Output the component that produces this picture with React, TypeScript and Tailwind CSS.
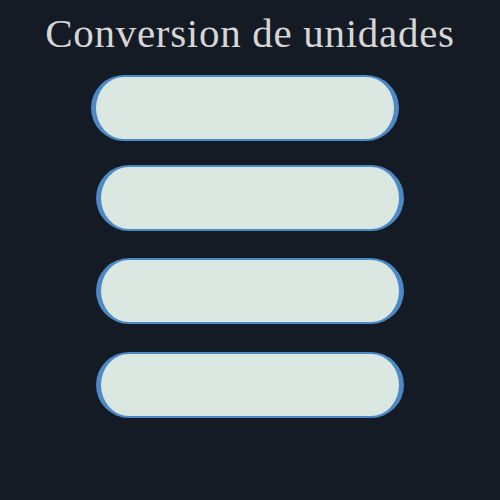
import React from 'react';

const pills = [
  { id: 'a', cls: 'mr-[10px]' },
  { id: 'b', cls: 'mt-[24px]' },
  { id: 'c', cls: 'mt-[27px]' },
  { id: 'd', cls: 'mt-[28px]' },
];

export default function App() {
  return (
    <div className="flex h-[500px] w-[500px] flex-col items-center bg-[#151b25]">
      <h1 className="mt-[9px] font-['Liberation_Serif',serif] text-[41px] leading-[48px] tracking-[0.7px] text-[#d6d6d6]">
        Conversion de unidades
      </h1>
      <div className="mt-[18px] flex flex-col items-center">
        {pills.map((p) => (
          <button
            key={p.id}
            className={
              'h-[66px] w-[308px] rounded-full border-x-[5px] border-y-[2px] border-[#4b8ac6] bg-[#dbe8e2] ' +
              p.cls
            }
          />
        ))}
      </div>
    </div>
  );
}
